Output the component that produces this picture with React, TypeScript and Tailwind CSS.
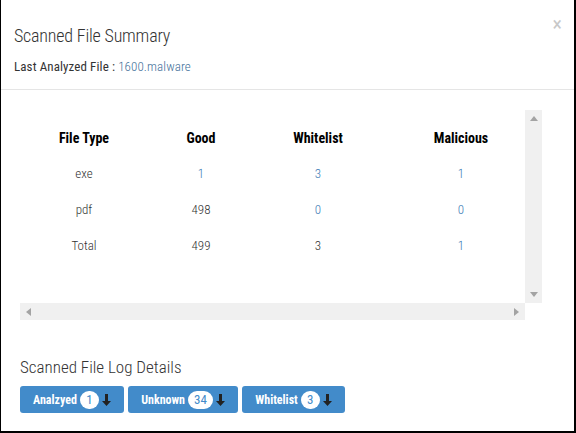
type Row = { type: string, good: string, white: string, mal: string, goodLink?: boolean, whiteLink?: boolean }

const rows: Row[] = [
  { type: "exe", good: "1", white: "3", mal: "1", goodLink: true, whiteLink: true },
  { type: "pdf", good: "498", white: "0", mal: "0", whiteLink: true },
  { type: "Total", good: "499", white: "3", mal: "1" },
]

function DownArrow() {
  return (
    <svg width="9" height="12" viewBox="0 0 9 12">
      <path d="M3 0 H6 V7 H9 L4.5 12 L0 7 H3 Z" fill="#222" />
    </svg>
  )
}

function LogButton({ label, count, width }: { label: string, count: string, width: string }) {
  return (
    <button className={`${width} h-[27px] rounded-[3px] bg-[#428bca] flex items-center justify-center gap-[3px] text-white text-[12px] font-bold`}>
      <span>{label}</span>
      <span className="bg-white text-[#428bca] rounded-full h-[18px] min-w-[19px] px-[6px] text-[13px] font-normal leading-[18px]">{count}</span>
      <DownArrow />
    </button>
  )
}

export default function App() {
  return (
    <div className="w-[576px] h-[433px] bg-white border-l border-r-2 border-b-2 border-black font-['Roboto_Condensed','Roboto',sans-serif] text-[#333] flex flex-col">
      {/* header */}
      <div className="relative h-[90px] border-b border-[#e5e5e5] pl-[13px] pt-[25px]">
        <h3 className="text-[18px] font-light leading-[22px] tracking-[-0.2px] text-[#333]">Scanned File Summary</h3>
        <p className="mt-[12px] text-[13px] leading-[16px] tracking-[0.1px]">
          Last Analyzed File : <span className="font-light text-[#3f6f99]">1600.malware</span>
        </p>
        <span className="absolute right-[12px] top-[14px] text-[20px] leading-none text-[#c8c8c8]">×</span>
      </div>

      {/* scrolling table */}
      <div className="mt-[20px] ml-[19px] w-[522px] h-[211px] flex flex-col">
        <div className="flex h-[193px]">
          <div className="w-[505px] overflow-hidden pt-[10px]">
            <div className="grid grid-cols-[128px_106px_128px_158px] w-[520px] text-[13px] font-light text-center">
              <div className="h-[36px] flex items-center justify-center font-bold text-[14px] text-black">File Type</div>
              <div className="h-[36px] flex items-center justify-center font-bold text-[14px] text-black">Good</div>
              <div className="h-[36px] flex items-center justify-center font-bold text-[14px] text-black">Whitelist</div>
              <div className="h-[36px] flex items-center justify-center font-bold text-[14px] text-black">Malicious</div>
              {rows.map((r) => (
                <>
                  <div key={r.type + "t"} className="h-[36px] flex items-center justify-center">{r.type}</div>
                  <div key={r.type + "g"} className={`h-[36px] flex items-center justify-center ${r.goodLink ? "text-[#3d7bb5]" : ""}`}>{r.good}</div>
                  <div key={r.type + "w"} className={`h-[36px] flex items-center justify-center ${r.whiteLink ? "text-[#3d7bb5]" : ""}`}>{r.white}</div>
                  <div key={r.type + "m"} className="h-[36px] flex items-center justify-center text-[#3d7bb5]">{r.mal}</div>
                </>
              ))}
            </div>
          </div>
          <div className="w-[17px] bg-[#f0f0f0] flex flex-col justify-between items-center py-[6px]">
            <svg width="8" height="5" viewBox="0 0 8 5"><path d="M0 5 L4 0 L8 5 Z" fill="#a3a3a3" /></svg>
            <svg width="8" height="5" viewBox="0 0 8 5"><path d="M0 0 L4 5 L8 0 Z" fill="#a3a3a3" /></svg>
          </div>
        </div>
        <div className="flex h-[17px]">
          <div className="w-[505px] bg-[#f0f0f0] flex justify-between items-center px-[6px]">
            <svg width="5" height="8" viewBox="0 0 5 8"><path d="M5 0 L0 4 L5 8 Z" fill="#a3a3a3" /></svg>
            <svg width="5" height="8" viewBox="0 0 5 8"><path d="M0 0 L5 4 L0 8 Z" fill="#a3a3a3" /></svg>
          </div>
          <div className="w-[17px]" />
        </div>
      </div>

      {/* log details */}
      <div className="pl-[19px] mt-[36px]">
        <h4 className="text-[17px] font-light leading-[20px] text-[#333]">Scanned File Log Details</h4>
        <div className="mt-[9px] flex gap-[4px]">
          <LogButton label="Analzyed" count="1" width="w-[104px]" />
          <LogButton label="Unknown" count="34" width="w-[110px]" />
          <LogButton label="Whitelist" count="3" width="w-[103px]" />
        </div>
      </div>
    </div>
  )
}
